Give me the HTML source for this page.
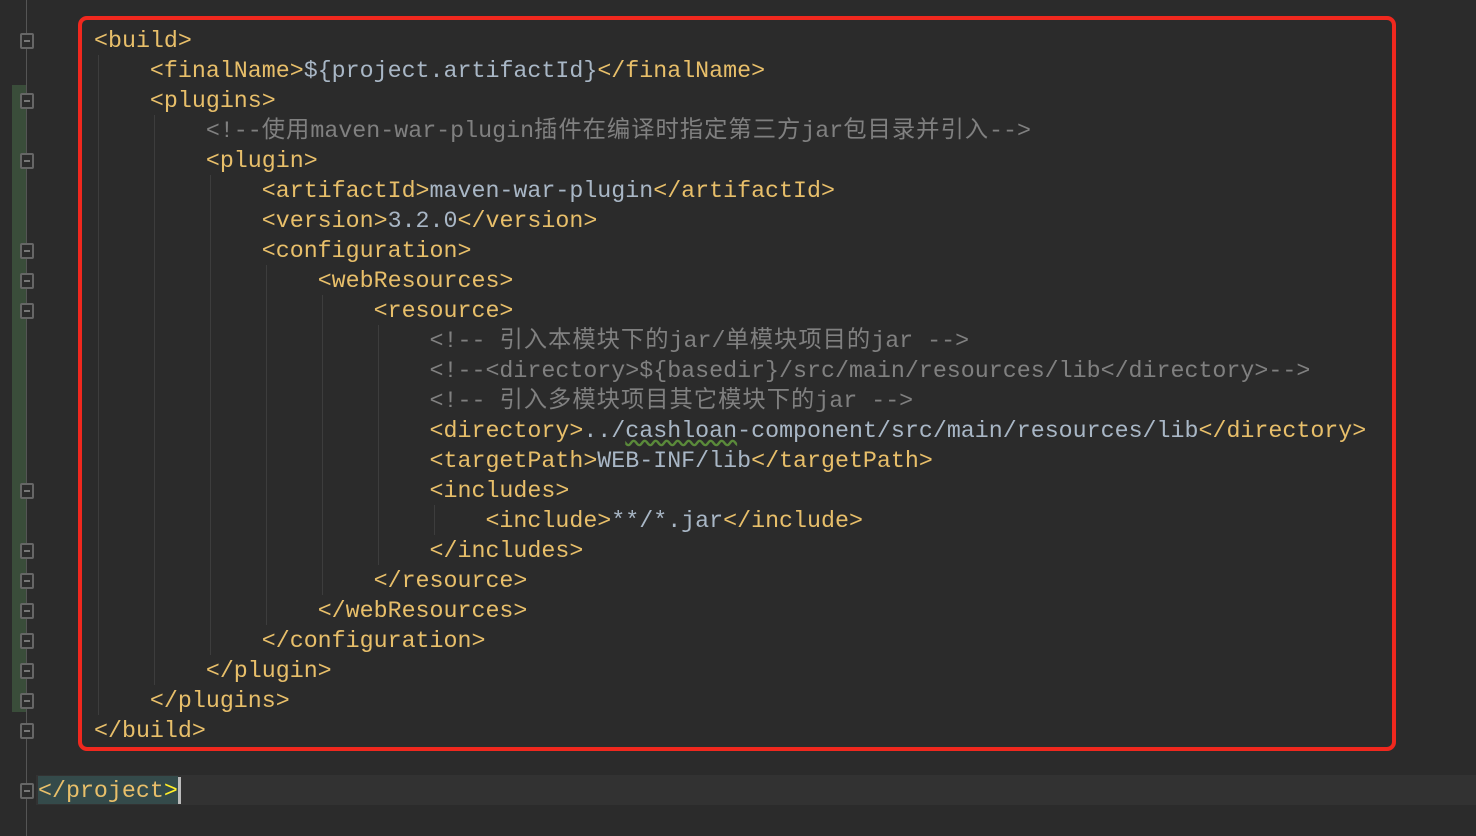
<!DOCTYPE html>
<html><head><style>
body{margin:0;background:#2b2b2b;width:1476px;height:836px;overflow:hidden;position:relative;font-family:"Liberation Mono","Noto Sans CJK SC",monospace;font-size:23.3px}
.l{position:absolute;left:94px;height:30px;line-height:32px;white-space:pre;color:#a9b7c6}
.t{color:#e8bf6a}.c{color:#808080}
.k{letter-spacing:1px}
.g{position:absolute;width:1px;background:#3d3d3d}
.f{position:absolute;left:20px;width:14px;height:16px;border:2px solid #666;box-sizing:border-box;background:#2b2b2b;border-radius:2px}
.f:after{content:"";position:absolute;left:2px;top:5px;width:6px;height:2px;background:#777}
</style></head><body>
<div style="position:absolute;left:12px;top:85px;width:14px;height:627px;background:#3a4d3a"></div>
<div style="position:absolute;left:26px;top:0;width:1px;height:836px;background:#555"></div>
<div style="position:absolute;left:36px;top:775px;width:1440px;height:30px;background:#323232"></div>
<div style="position:absolute;left:38px;top:776px;width:140px;height:28px;background:#344a4a"></div>
<div style="position:absolute;left:178px;top:777px;width:3px;height:27px;background:#bbb"></div>
<div class="g" style="left:98px;top:55px;height:660px"></div>
<div class="g" style="left:154px;top:115px;height:570px"></div>
<div class="g" style="left:210px;top:175px;height:480px"></div>
<div class="g" style="left:266px;top:265px;height:360px"></div>
<div class="g" style="left:322px;top:295px;height:300px"></div>
<div class="g" style="left:378px;top:325px;height:240px"></div>
<div class="g" style="left:434px;top:505px;height:30px"></div>
<div class="f" style="top:33px"></div><div class="f" style="top:93px"></div><div class="f" style="top:153px"></div>
<div class="f" style="top:243px"></div><div class="f" style="top:273px"></div><div class="f" style="top:303px"></div>
<div class="f" style="top:483px"></div><div class="f" style="top:543px"></div><div class="f" style="top:573px"></div>
<div class="f" style="top:603px"></div><div class="f" style="top:633px"></div><div class="f" style="top:663px"></div>
<div class="f" style="top:693px"></div><div class="f" style="top:723px"></div><div class="f" style="top:783px"></div>
<div class="l" style="top:25px"><span class="t">&lt;build&gt;</span></div>
<div class="l" style="top:55px">    <span class="t">&lt;finalName&gt;</span>${project.artifactId}<span class="t">&lt;/finalName&gt;</span></div>
<div class="l" style="top:85px">    <span class="t">&lt;plugins&gt;</span></div>
<div class="l" style="top:115px">        <span class="c">&lt;!--<span class="k">使用</span>maven-war-plugin<span class="k">插件在编译时指定第三方</span>jar<span class="k">包目录并引入</span>--&gt;</span></div>
<div class="l" style="top:145px">        <span class="t">&lt;plugin&gt;</span></div>
<div class="l" style="top:175px">            <span class="t">&lt;artifactId&gt;</span>maven-war-plugin<span class="t">&lt;/artifactId&gt;</span></div>
<div class="l" style="top:205px">            <span class="t">&lt;version&gt;</span>3.2.0<span class="t">&lt;/version&gt;</span></div>
<div class="l" style="top:235px">            <span class="t">&lt;configuration&gt;</span></div>
<div class="l" style="top:265px">                <span class="t">&lt;webResources&gt;</span></div>
<div class="l" style="top:295px">                    <span class="t">&lt;resource&gt;</span></div>
<div class="l" style="top:325px">                        <span class="c">&lt;!-- <span class="k">引入本模块下的</span>jar/<span class="k">单模块项目的</span>jar --&gt;</span></div>
<div class="l" style="top:355px">                        <span class="c">&lt;!--&lt;directory&gt;${basedir}/src/main/resources/lib&lt;/directory&gt;--&gt;</span></div>
<div class="l" style="top:385px">                        <span class="c">&lt;!-- <span class="k">引入多模块项目其它模块下的</span>jar --&gt;</span></div>
<div class="l" style="top:415px">                        <span class="t">&lt;directory&gt;</span>../<span style="text-decoration:underline wavy #5a8a3a">cashloan</span>-component/src/main/resources/lib<span class="t">&lt;/directory&gt;</span></div>
<div class="l" style="top:445px">                        <span class="t">&lt;targetPath&gt;</span>WEB-INF/lib<span class="t">&lt;/targetPath&gt;</span></div>
<div class="l" style="top:475px">                        <span class="t">&lt;includes&gt;</span></div>
<div class="l" style="top:505px">                            <span class="t">&lt;include&gt;</span>**/*.jar<span class="t">&lt;/include&gt;</span></div>
<div class="l" style="top:535px">                        <span class="t">&lt;/includes&gt;</span></div>
<div class="l" style="top:565px">                    <span class="t">&lt;/resource&gt;</span></div>
<div class="l" style="top:595px">                <span class="t">&lt;/webResources&gt;</span></div>
<div class="l" style="top:625px">            <span class="t">&lt;/configuration&gt;</span></div>
<div class="l" style="top:655px">        <span class="t">&lt;/plugin&gt;</span></div>
<div class="l" style="top:685px">    <span class="t">&lt;/plugins&gt;</span></div>
<div class="l" style="top:715px"><span class="t">&lt;/build&gt;</span></div>
<div class="l" style="top:775px;left:38px"><span class="t">&lt;/project<span style="color:#ffef28">&gt;</span></span></div>
<div style="position:absolute;left:78px;top:16px;width:1318px;height:735px;border:4px solid #f0281e;border-radius:9px;box-sizing:border-box"></div>
</body></html>
